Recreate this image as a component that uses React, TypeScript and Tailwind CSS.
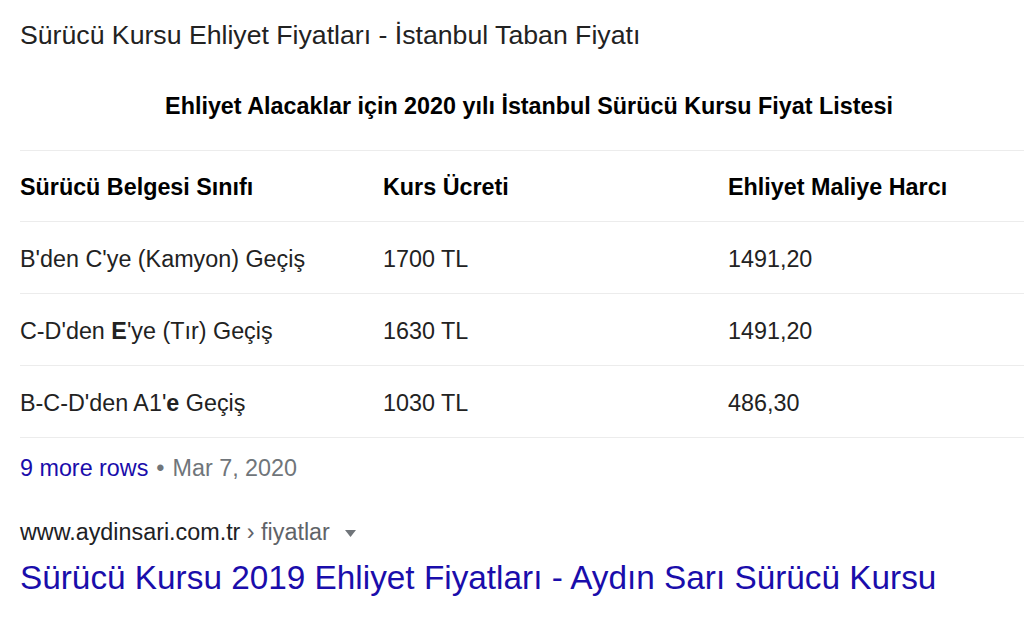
const rows = [
  {
    name: <>B'den C'ye (Kamyon) Geçiş</>,
    fee: "1700 TL",
    tax: "1491,20",
  },
  {
    name: (
      <>
        C-D'den <b>E</b>'ye (Tır) Geçiş
      </>
    ),
    fee: "1630 TL",
    tax: "1491,20",
  },
  {
    name: (
      <>
        B-C-D'den A1'<b>e</b> Geçiş
      </>
    ),
    fee: "1030 TL",
    tax: "486,30",
  },
];

const App = () => {
  return (
    <div className="w-[1024px] h-[617px] overflow-hidden bg-white pl-[20px] font-['Liberation_Sans',Arial,sans-serif] text-[#222]">
      <div className="pt-[19px] text-[26.67px] leading-[32px] whitespace-nowrap">
        Sürücü Kursu Ehliyet Fiyatları - İstanbul Taban Fiyatı
      </div>

      <div className="w-[1018px] mt-[41px]">
        <div className="text-center font-bold text-[23.33px] leading-[28px] text-black pb-[30px] whitespace-nowrap">
          Ehliyet Alacaklar için 2020 yılı İstanbul Sürücü Kursu Fiyat Listesi
        </div>
        <div className="grid grid-cols-[363px_345px_1fr] h-[71px] pt-[3px] items-center border-t border-[#ececec] font-bold text-[23.33px] text-black">
          <div>Sürücü Belgesi Sınıfı</div>
          <div>Kurs Ücreti</div>
          <div>Ehliyet Maliye Harcı</div>
        </div>
        {rows.map((row, idx) => (
          <div
            key={idx}
            className={
              idx === rows.length - 1
                ? "grid grid-cols-[363px_345px_1fr] h-[73px] pt-[4px] items-center border-t border-b border-[#ececec] text-[23.33px]"
                : "grid grid-cols-[363px_345px_1fr] h-[72px] pt-[4px] items-center border-t border-[#ececec] text-[23.33px]"
            }
          >
            <div className="whitespace-nowrap">{row.name}</div>
            <div>{row.fee}</div>
            <div>{row.tax}</div>
          </div>
        ))}
      </div>

      <div className="mt-[16px] flex items-center text-[23.33px] leading-[28px] whitespace-nowrap">
        <span className="text-[#1a0dab]">9 more rows</span>
        <span className="text-[#70757a] px-[8px]">•</span>
        <span className="text-[#70757a]">Mar 7, 2020</span>
      </div>

      <div className="mt-[36px] flex items-center text-[23.33px] leading-[28px] whitespace-nowrap">
        <span className="text-[#202124]">www.aydinsari.com.tr</span>
        <span className="text-[#5f6368]">&nbsp;› fiyatlar</span>
        <svg className="ml-[15px] mt-[2px]" width="11" height="7" viewBox="0 0 11 7">
          <path d="M0 0h11L5.5 7z" fill="#70757a" />
        </svg>
      </div>

      <div className="mt-[12px] text-[33.33px] leading-[40px] text-[#1a0dab] whitespace-nowrap">
        Sürücü Kursu 2019 Ehliyet Fiyatları - Aydın Sarı Sürücü Kursu
      </div>
    </div>
  );
};

export default App;
